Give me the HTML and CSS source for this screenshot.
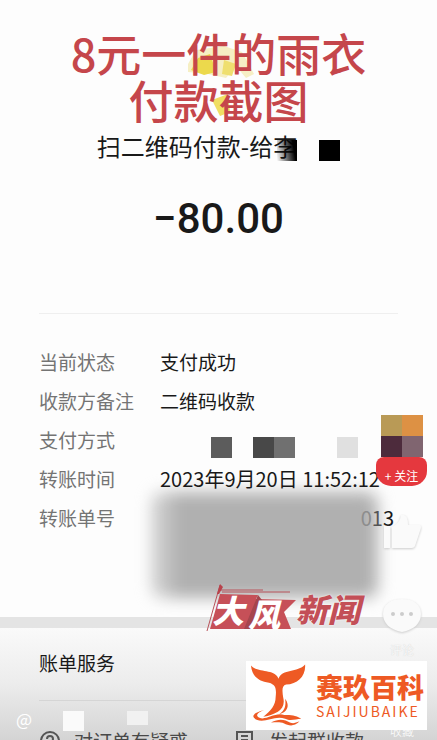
FILE: index.html
```html
<!DOCTYPE html>
<html lang="zh-CN">
<head>
    <meta charset="UTF-8">
    <meta name="viewport" content="width=device-width, initial-scale=1.0">
    <title>付款截图</title>
    <link rel="stylesheet" href="styles.css">
</head>
<body>
    <main class="page">
        <!-- Payment summary -->
        <header class="summary">
            <svg class="avatar" viewBox="0 0 70 80" aria-hidden="true">
                <path d="M2 20 L10 6 L38 2 L56 8 L68 30 L60 34 L50 22 L40 34 L22 30 L2 28 Z" fill="#f6efc4"/>
                <path d="M12 14 L24 10 L30 28 L18 31 L5 26 Z" fill="#ecd94c"/>
                <path d="M38 16 L50 20 L46 32 L36 30 Z" fill="#efdf70"/>
                <path d="M26 56 L42 50 L44 68 L34 72 Z" fill="#f0de62"/>
            </svg>
            <h1 class="headline">8元一件的雨衣<br>付款截图</h1>
            <p class="payee">扫二维码付款-给李<span class="mask-fade"></span><span class="mask-block"></span></p>
            <p class="amount">−80.00</p>
        </header>

        <!-- Transfer details -->
        <dl class="details">
            <dt>当前状态</dt>
            <dd>支付成功</dd>
            <dt>收款方备注</dt>
            <dd>二维码收款</dd>
            <dt>支付方式</dt>
            <dd class="mosaic"><i class="m1"></i><i></i><i class="m2"></i><i class="m3"></i><i></i><i></i><i class="m4"></i></dd>
            <dt>转账时间</dt>
            <dd class="time">2023年9月20日 11:52:12</dd>
            <dt>转账单号</dt>
            <dd class="number"><span class="smudge"></span><span class="tail"><span class="dim">0</span><span class="mid">1</span>3</span></dd>
        </dl>

        <!-- Bill services -->
        <section class="services">
            <h2>账单服务</h2>
            <div class="links">
                <a href="#">
                    <svg class="icon" viewBox="0 0 22 22" aria-hidden="true">
                        <circle cx="11" cy="11" r="9"/>
                        <path d="M8 9 Q8 6 11 6 Q14 6 14 9 Q14 11 11 12 V14"/>
                    </svg>
                    对订单有疑惑
                </a>
                <a href="#">
                    <svg class="icon" viewBox="0 0 22 22" aria-hidden="true">
                        <path d="M3 2 H18 V20 H3 Z M7 6 H14 M7 10 H14"/>
                    </svg>
                    发起群收款
                </a>
            </div>
        </section>

        <!-- Video controls on top of the page -->
        <div class="follow">
            <div class="face"><i class="f1"></i><i class="f2"></i><i class="f3"></i><i class="f4"></i></div>
            <button type="button"><span>+</span> 关注</button>
        </div>
        <svg class="like" viewBox="0 0 42 40" aria-hidden="true">
            <path d="M3 14 H9 V36 H3 Z M11 15 Q19 11 20 3 Q27 1 27 13 H39 Q41 14 39 19 L34 34 Q33 36 31 36 H11 Z"/>
        </svg>
        <svg class="comment" viewBox="0 0 44 40" aria-hidden="true">
            <path d="M22 3 C34 3 41 9 41 18 C41 27 34 34 22 36 C10 34 3 27 3 18 C3 9 10 3 22 3 Z"/>
            <circle cx="13" cy="18" r="2"/>
            <circle cx="22" cy="18" r="2"/>
            <circle cx="31" cy="18" r="2"/>
        </svg>
        <span class="count comment-count">评论</span>
        <span class="count save-count">收藏</span>

        <div class="news">
            <svg class="flag" viewBox="0 0 90 50" aria-hidden="true">
                <path d="M14 11 L52 12 L50 16 L90 17 L78 29 L85 46 L4 46 Z" fill="#c65058"/>
                <path d="M52 12 L38 46 H45 L56 17 Z" fill="#a5464e"/>
                <path d="M14 2 L1 48 M13 7 H57 M16 9 H84" fill="none" stroke="#b8525a" stroke-width="1"/>
                <path d="M14 1 L17 4 L13 11 L11 11 Z" fill="#b8424b"/>
            </svg>
            <span class="news-da">大</span>
            <span class="news-feng">风</span>
            <span class="news-text">新闻</span>
        </div>

        <div class="user"><span>@</span><i></i><i></i></div>

        <div class="brand">
            <svg class="whale" viewBox="0 0 60 64" aria-hidden="true">
                <path d="M1 1 C8 9 27 4 30 15 C34 4 50 9 58 0 C59 12 50 21 38 21 C33 22 34 29 35 35 C38 47 28 52 14 55 C22 48 27 43 27 34 C28 25 27 21 20 19 C9 18 2 12 1 1 Z"/>
                <path d="M15 48 C4 50 0 55 7 58 C16 62 26 53 37 57 C43 60 48 57 54 57 C47 53 44 53 36 53 C26 50 17 59 10 56 C5 54 8 50 15 48 Z"/>
                <path d="M22 61 C31 56 37 58 42 61 C47 63 50 60 52 60 C46 66 40 64 36 62 C31 60 27 61 22 61 Z"/>
                <path d="M37 36 C43 44 38 51 31 52 C37 48 38 43 37 36 Z"/>
            </svg>
            <div class="brand-name">
                <strong>赛玖百科</strong>
                <span>SAIJIUBAIKE</span>
            </div>
        </div>
    </main>
</body>
</html>
```

FILE: styles.css
```css
* {
    box-sizing: border-box;
}
body {
    margin: 0;
    font-family: "Noto Sans CJK SC", sans-serif;
    background-color: #fdfdfd;
    color: #191919;
}
h1, h2, p, dl, dd {
    margin: 0;
    font-weight: 400;
}
.page {
    position: relative;
    height: 100vh;
    overflow: hidden;
}
.summary {
    position: relative;
    margin: 0 39px;
    padding-top: 29px;
    height: 314px;
    text-align: center;
    border-bottom: 1px solid #efefef;
}
.avatar {
    position: absolute;
    left: 147px;
    top: 44px;
    width: 70px;
    height: 80px;
}
.headline {
    position: relative;
    margin: 0 -20px;
    font-size: 45px;
    font-weight: 500;
    line-height: 47px;
    color: #c5464b;
}
.payee {
    display: flex;
    justify-content: center;
    align-items: center;
    margin-top: 6px;
    font-size: 24px;
    line-height: 34px;
    white-space: nowrap;
}
.mask-fade {
    width: 20px;
    height: 21px;
    margin: 8px 0 0 -20px;
    background: linear-gradient(80deg, rgba(0, 0, 0, 0), #000 80%);
}
.mask-block {
    width: 21px;
    height: 21px;
    margin: 8px 0 0 22px;
    background-color: #000;
}
.amount {
    margin-top: 31px;
    font-family: Roboto, sans-serif;
    font-size: 42px;
    font-weight: 500;
    line-height: 50px;
}

/* details */
.details {
    display: grid;
    grid-template-columns: 121px 1fr;
    grid-auto-rows: 39px;
    height: 303px;
    padding: 28px 39px 0;
    font-size: 19px;
    line-height: 39px;
    white-space: nowrap;
}
.details dt {
    color: #747474;
}
.details .time {
    position: relative;
    z-index: 1;
    font-size: 20px;
}
.mosaic {
    display: flex;
    align-items: center;
    padding: 15px 0 0 51px;
}
.mosaic i {
    width: 21px;
    height: 21px;
}
.mosaic .m1 {
    background-color: #5c5c5c;
}
.mosaic .m2 {
    background-color: #484848;
}
.mosaic .m3 {
    background-color: #707070;
}
.mosaic .m4 {
    background-color: #e0e0e0;
}
.number {
    position: relative;
}
.smudge {
    position: absolute;
    left: -8px;
    right: 20px;
    top: -6px;
    height: 106px;
    background: linear-gradient(90deg, #c8c8c8 20px, #b0b0b0 20px);
    border-radius: 12px;
    filter: blur(8px);
}
.tail {
    position: absolute;
    right: 4px;
    font-size: 20px;
}
.tail .dim {
    color: #8d8d8d;
}
.tail .mid {
    color: #555;
}

/* services */
.services {
    position: relative;
    height: 123px;
    border-top: 11px solid #e4e4e4;
    background: linear-gradient(#fafafa, #ececec 50%, #d4d4d4);
}
.services h2 {
    padding: 15px 39px 0;
    font-size: 19px;
    line-height: 39px;
}
.links {
    display: grid;
    grid-template-columns: 195px 1fr;
    margin: 18px 39px 0;
    padding-top: 20px;
    border-top: 1px solid #d5d5d5;
}
.links a {
    display: flex;
    align-items: center;
    gap: 13px;
    font-size: 19px;
    line-height: 39px;
    color: #484848;
    text-decoration: none;
    white-space: nowrap;
}
.icon {
    width: 22px;
    height: 22px;
    fill: none;
    stroke: #555;
    stroke-width: 2;
}

/* controls over the page */
.follow {
    position: absolute;
    right: 10px;
    top: 415px;
    z-index: 2;
    width: 51px;
}
.face {
    display: grid;
    grid-template-columns: 21px 21px;
    grid-auto-rows: 21px;
    justify-content: center;
}
.f1 {
    background-color: #b99a56;
}
.f2 {
    background-color: #dd9144;
}
.f3 {
    background-color: #4d2b3c;
}
.f4 {
    background-color: #806570;
}
.follow button {
    width: 100%;
    height: 29px;
    padding: 8px 0 0;
    border: none;
    border-radius: 8px 8px 15px 15px;
    background-color: #e5383e;
    color: #fff;
    font-family: inherit;
    font-size: 12px;
    line-height: 14px;
    cursor: pointer;
}
.like, .comment {
    position: absolute;
    fill: #fafafa;
    filter: drop-shadow(0 1px 1px #ccc);
}
.like {
    right: 14px;
    top: 512px;
    width: 42px;
    height: 40px;
}
.comment {
    right: 13px;
    top: 596px;
    width: 44px;
    height: 40px;
}
.comment circle {
    fill: #ccc;
}
.count {
    position: absolute;
    right: 23px;
    font-size: 12px;
    line-height: 18px;
    color: #f8f8f8;
    text-shadow: 0 0 1px #ccc;
}
.comment-count {
    top: 641px;
}
.save-count {
    bottom: 0;
}

/* news mark */
.news {
    position: absolute;
    left: 206px;
    top: 583px;
    width: 160px;
    height: 50px;
    font-style: italic;
    font-weight: 900;
}
.news span {
    position: absolute;
    color: #fff;
    white-space: nowrap;
}
.flag {
    width: 90px;
    height: 50px;
}
.news .news-da {
    left: 6px;
    top: 8px;
    font-size: 32px;
    line-height: 36px;
}
.news .news-feng {
    left: 42px;
    top: 12px;
    font-size: 32px;
    line-height: 36px;
}
.news .news-text {
    left: 90px;
    top: 7px;
    font-size: 32px;
    line-height: 36px;
    color: #c34f57;
    text-shadow: 0 0 2px #fff;
}

/* video author */
.user {
    position: absolute;
    left: 16px;
    top: 711px;
    display: flex;
    align-items: flex-start;
    font-size: 17px;
    line-height: 15px;
    color: #fff;
}
.user i {
    width: 21px;
    height: 20px;
    margin-left: 31px;
    background-color: #fafafa;
}
.user i + i {
    height: 14px;
    margin-left: 43px;
    background-color: #f1f1f1;
}

/* brand card */
.brand {
    position: absolute;
    right: 10px;
    bottom: 10px;
    display: flex;
    gap: 9px;
    height: 69px;
    padding: 3px 3px 3px 4px;
    background-color: #fff;
    color: #ee5a24;
    white-space: nowrap;
}
.whale {
    width: 57px;
    height: 62px;
    fill: #ee5a24;
}
.brand-name {
    display: flex;
    flex-direction: column;
    padding-top: 7px;
}
.brand-name strong {
    font-size: 27px;
    font-weight: 900;
    line-height: 32px;
}
.brand-name span {
    font-size: 14px;
    line-height: 16px;
    letter-spacing: 2px;
}
```
